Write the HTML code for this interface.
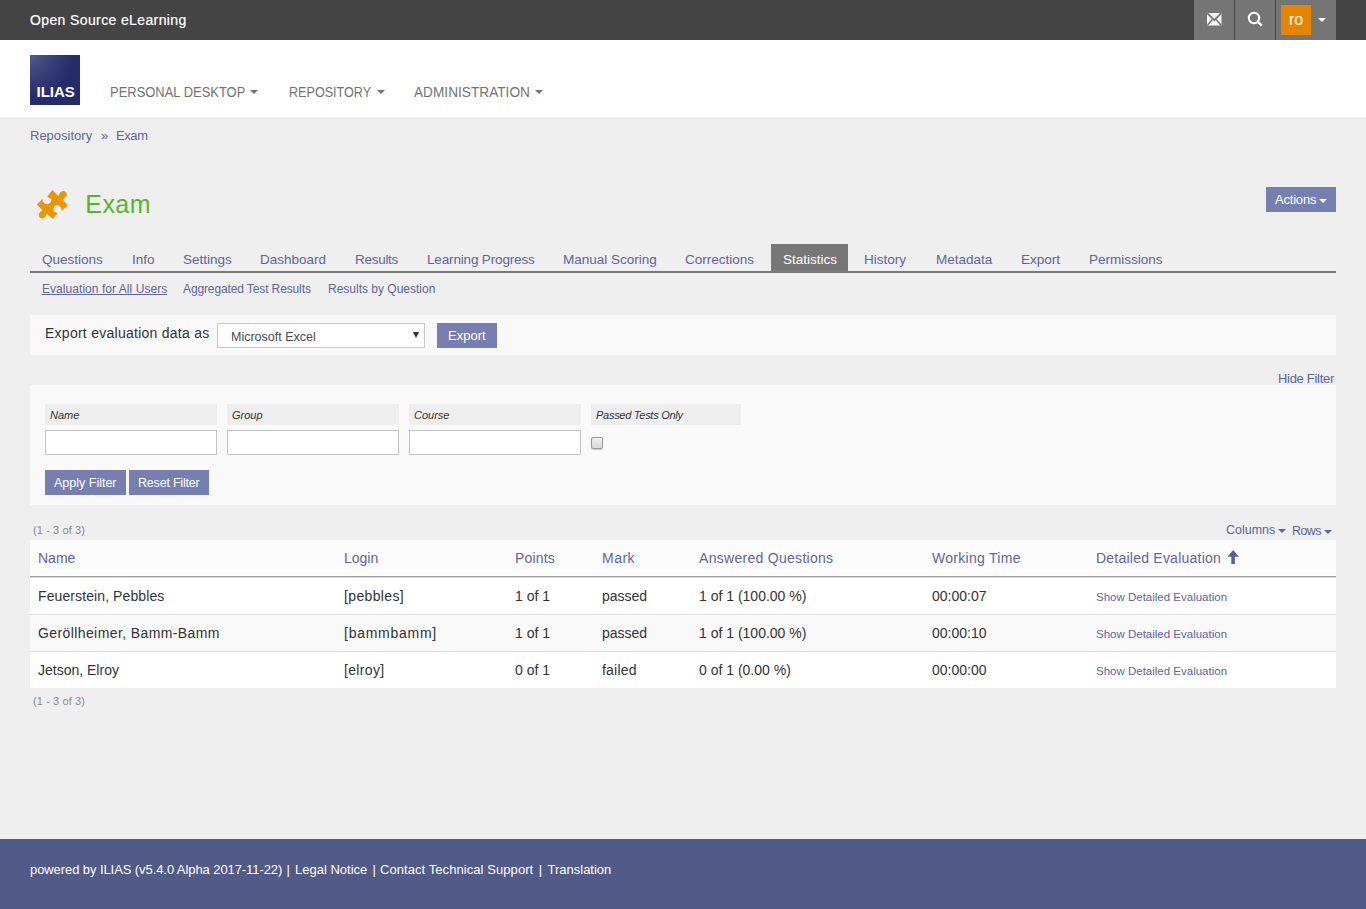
<!DOCTYPE html>
<html><head><meta charset="utf-8">
<style>
*{box-sizing:border-box;margin:0;padding:0}
html,body{width:1366px;height:909px;overflow:hidden}
body{font-family:"Liberation Sans",sans-serif;background:#efefef;position:relative;color:#333333;font-size:14px;line-height:1}
.a{position:absolute;white-space:nowrap;line-height:1}
.bx{position:absolute}
.lnk{color:#60659e}
#top{left:0;top:0;width:1366px;height:40px;background:#444444}
#hdr{left:0;top:40px;width:1366px;height:77px;background:#fff}
#logo{left:30px;top:55px;width:50px;height:50px;background:radial-gradient(ellipse at 0% 0%,#525a8e 0%,#3a4079 30%,#262d6a 60%,#222a68 100%);overflow:hidden}
.nav{top:85px;color:#737373;font-size:14px;transform-origin:0 0}
.caret{display:inline-block;width:0;height:0;border-left:4px solid transparent;border-right:4px solid transparent;border-top:4px solid currentColor;vertical-align:middle}
.tab{top:252.5px;font-size:13.5px;color:#60659e}
.sub{top:283.4px;font-size:12px;color:#60659e}
.btn{background:#777fb0;color:#fff}
.lbl{background:#eeeeee;font-style:italic;font-size:11px;color:#333}
.inp{background:#fff;border:1px solid #c4c4c4}
.th{top:551px;font-size:14px;color:#60659e}
.td{font-size:14px;color:#333333}
.sde{font-size:11.5px;color:#60659e}
.ft{top:863px;font-size:13px;color:#fff}
#footer{left:0;top:839px;width:1366px;height:70px;background:#525a87;color:#fff}
</style></head>
<body>
<!-- top bar -->
<div id="top" class="bx"></div>
<div class="a" style="left:30px;top:13px;color:#fff;font-size:14px;letter-spacing:0.38px;-webkit-text-stroke:0.2px #fff">Open Source eLearning</div>
<div class="bx" style="left:1194px;top:0;width:142px;height:40px;background:#757575"></div>
<div class="bx" style="left:1234px;top:0;width:1px;height:40px;background:#464646"></div>
<div class="bx" style="left:1275px;top:0;width:1px;height:40px;background:#464646"></div>
<svg class="bx" style="left:1206px;top:12px" width="17" height="15" viewBox="0 0 17 15">
  <rect x="1" y="1" width="14.5" height="12.5" fill="#f4f4f4"/>
  <path d="M1.2 1.2 L8.25 8.2 L15.3 1.2" stroke="#757575" stroke-width="1.7" fill="none"/>
  <path d="M1.2 13.4 L6.3 7.4 M15.3 13.4 L10.2 7.4" stroke="#757575" stroke-width="1.5" fill="none"/>
</svg>
<svg class="bx" style="left:1246px;top:11px" width="19" height="17" viewBox="0 0 19 17">
  <circle cx="8" cy="7" r="5.2" stroke="#fff" stroke-width="2" fill="none"/>
  <path d="M11.6 10.6 L15.8 14.6" stroke="#fff" stroke-width="2.6" stroke-linecap="butt"/>
</svg>
<div class="bx" style="left:1281px;top:5px;width:30px;height:30px;background:#e68500"></div>
<div class="a" style="left:1289px;top:11.8px;color:#fff;font-size:16px">ro</div>
<div class="bx" style="left:1318px;top:18px;width:0;height:0;border-left:4px solid transparent;border-right:4px solid transparent;border-top:4px solid #fff"></div>

<!-- header -->
<div id="hdr" class="bx"></div>
<div id="logo" class="bx"><div class="a" style="left:6.5px;top:28.7px;color:#fff;font-weight:bold;font-size:15px">ILIAS</div></div>
<div class="a nav" style="left:110px;transform:scaleX(0.925)">PERSONAL DESKTOP</div>
<div class="bx caret" style="left:250px;top:90px;color:#737373"></div>
<div class="a nav" style="left:289px;transform:scaleX(0.899)">REPOSITORY</div>
<div class="bx caret" style="left:377px;top:90px;color:#737373"></div>
<div class="a nav" style="left:414px;transform:scaleX(0.976)">ADMINISTRATION</div>
<div class="bx caret" style="left:535px;top:90px;color:#737373"></div>

<!-- breadcrumb -->
<div class="a lnk" style="left:30px;top:129px;font-size:13px">Repository</div>
<div class="a" style="left:101px;top:129px;font-size:13px;color:#60659e">»</div>
<div class="a lnk" style="left:116px;top:129px;font-size:13px;letter-spacing:-0.4px">Exam</div>

<!-- title -->
<svg class="bx" style="left:32px;top:186px" width="40" height="36" viewBox="0 0 1010 909">
  <path fill="#e8960a" d="M515,100 L665,252 C690,235 690,150 760,130 C830,115 890,170 880,230 C870,290 800,320 780,345 L905,490 L750,625 C740,560 720,500 640,482 C580,475 540,540 540,600 C540,630 560,650 650,690 L520,830 L370,700 C350,730 350,800 270,820 C210,830 165,780 172,720 C180,660 240,630 260,612 L125,470 L258,330 C270,380 300,460 370,462 C450,462 490,400 490,335 C460,310 420,290 385,262 Z"/>
</svg>
<div class="a" style="left:85.3px;top:192px;font-size:25px;color:#57b530;letter-spacing:0.45px">Exam</div>
<div class="bx btn" style="left:1266px;top:187px;width:70px;height:25px"></div>
<div class="a" style="left:1275px;top:193px;font-size:13px;color:#fff;letter-spacing:-0.2px">Actions</div>
<div class="bx caret" style="left:1319px;top:199px;color:#fff"></div>

<!-- tabs -->
<div class="bx" style="left:771px;top:244px;width:77px;height:28px;background:#777777"></div>
<div class="bx" style="left:30px;top:271px;width:1306px;height:2px;background:#7a7a7a"></div>
<div class="a tab" style="left:42px">Questions</div>
<div class="a tab" style="left:132px">Info</div>
<div class="a tab" style="left:183px">Settings</div>
<div class="a tab" style="left:260px">Dashboard</div>
<div class="a tab" style="left:355px;letter-spacing:-0.28px">Results</div>
<div class="a tab" style="left:427px;letter-spacing:-0.16px">Learning Progress</div>
<div class="a tab" style="left:563px">Manual Scoring</div>
<div class="a tab" style="left:685px">Corrections</div>
<div class="a tab" style="left:783px;color:#fff">Statistics</div>
<div class="a tab" style="left:864px">History</div>
<div class="a tab" style="left:936px">Metadata</div>
<div class="a tab" style="left:1021px">Export</div>
<div class="a tab" style="left:1089px">Permissions</div>

<div class="a sub" style="left:42px;letter-spacing:0.05px">Evaluation for All Users</div>
<div class="bx" style="left:42px;top:294px;width:125px;height:1px;background:#60659e"></div>
<div class="a sub" style="left:183px;letter-spacing:-0.12px">Aggregated Test Results</div>
<div class="a sub" style="left:328px">Results by Question</div>

<!-- export panel -->
<div class="bx" style="left:30px;top:315px;width:1306px;height:40px;background:#f9f9f9"></div>
<div class="a" style="left:45px;top:326px;font-size:14px;color:#333333;letter-spacing:0.26px">Export evaluation data as</div>
<div class="bx" style="left:217px;top:323px;width:208px;height:25px;background:#fff;border:1px solid #c9c9c9"></div>
<div class="a" style="left:231px;top:331px;font-size:12.5px;color:#4a4a4a">Microsoft Excel</div>
<div class="bx" style="left:413px;top:332px;width:0;height:0;border-left:3px solid transparent;border-right:3px solid transparent;border-top:6px solid #333"></div>
<div class="bx btn" style="left:437px;top:323px;width:60px;height:25px"></div>
<div class="a" style="left:448px;top:329px;font-size:13px;color:#fff">Export</div>

<!-- filter -->
<div class="a lnk" style="left:1278px;top:372px;font-size:13px;letter-spacing:-0.3px">Hide Filter</div>
<div class="bx" style="left:30px;top:385px;width:1306px;height:120px;background:#f9f9f9"></div>
<div class="bx lbl" style="left:45px;top:404px;width:172px;height:21px"><span class="a" style="left:5px;top:6px">Name</span></div>
<div class="bx lbl" style="left:227px;top:404px;width:172px;height:21px"><span class="a" style="left:5px;top:6px">Group</span></div>
<div class="bx lbl" style="left:409px;top:404px;width:172px;height:21px"><span class="a" style="left:5px;top:6px">Course</span></div>
<div class="bx lbl" style="left:591px;top:404px;width:150px;height:21px"><span class="a" style="left:5px;top:6px;letter-spacing:-0.27px">Passed Tests Only</span></div>
<div class="bx inp" style="left:45px;top:430px;width:172px;height:25px"></div>
<div class="bx inp" style="left:227px;top:430px;width:172px;height:25px"></div>
<div class="bx inp" style="left:409px;top:430px;width:172px;height:25px"></div>
<div class="bx" style="left:591px;top:437px;width:12px;height:12px;border:1px solid #9a9a9a;border-radius:2px;background:linear-gradient(#efefef,#d9d9d9);box-shadow:0 0.5px 1px rgba(0,0,0,0.2)"></div>
<div class="bx btn" style="left:45px;top:470px;width:81px;height:25px"></div>
<div class="a" style="left:54px;top:477px;font-size:12.5px;color:#fff">Apply Filter</div>
<div class="bx btn" style="left:129px;top:470px;width:80px;height:25px"></div>
<div class="a" style="left:138px;top:477px;font-size:12.5px;color:#fff;letter-spacing:-0.2px">Reset Filter</div>

<!-- table -->
<div class="a" style="left:33px;top:525px;font-size:11px;color:#8a8a8a;letter-spacing:0.1px">(1 - 3 of 3)</div>
<div class="a lnk" style="left:1226px;top:524px;font-size:12.5px">Columns</div>
<div class="bx caret" style="left:1278px;top:529px;color:#60659e"></div>
<div class="a lnk" style="left:1292px;top:525px;font-size:12.5px;letter-spacing:-0.6px">Rows</div>
<div class="bx caret" style="left:1324px;top:530px;color:#60659e"></div>

<div class="bx" style="left:30px;top:540px;width:1306px;height:35px;background:#fcfcfc"></div>
<div class="bx" style="left:30px;top:575px;width:1306px;height:1px;background:#fff"></div>
<div class="bx" style="left:30px;top:576px;width:1306px;height:1px;background:#9e9e9e"></div>
<div class="bx" style="left:30px;top:577px;width:1306px;height:1px;background:#dcdcdc"></div>
<div class="bx" style="left:30px;top:578px;width:1306px;height:36px;background:#fff"></div>
<div class="bx" style="left:30px;top:614px;width:1306px;height:1px;background:#dedede"></div>
<div class="bx" style="left:30px;top:615px;width:1306px;height:36px;background:#f9f9f9"></div>
<div class="bx" style="left:30px;top:651px;width:1306px;height:1px;background:#dedede"></div>
<div class="bx" style="left:30px;top:652px;width:1306px;height:36px;background:#fff"></div>

<div class="a th" style="left:38px">Name</div>
<div class="a th" style="left:344px">Login</div>
<div class="a th" style="left:515px;letter-spacing:0.18px">Points</div>
<div class="a th" style="left:602px;letter-spacing:0.5px">Mark</div>
<div class="a th" style="left:699px;letter-spacing:0.29px">Answered Questions</div>
<div class="a th" style="left:932px;letter-spacing:0.29px">Working Time</div>
<div class="a th" style="left:1096px;letter-spacing:0.23px">Detailed Evaluation</div>
<svg class="bx" style="left:1227px;top:550px" width="13" height="14" viewBox="0 0 13 14">
  <path d="M6.2 0 L12 6.7 L7.9 6.7 L7.9 14 L4.3 14 L4.3 6.7 L0.5 6.7 Z" fill="#5a5f99"/>
</svg>

<div class="a td" style="left:38px;top:589px;letter-spacing:0.1px">Feuerstein, Pebbles</div>
<div class="a td" style="left:344px;top:589px;letter-spacing:0.36px">[pebbles]</div>
<div class="a td" style="left:515px;top:589px">1 of 1</div>
<div class="a td" style="left:602px;top:589px">passed</div>
<div class="a td" style="left:699px;top:589px">1 of 1 (100.00 %)</div>
<div class="a td" style="left:932px;top:589px">00:00:07</div>
<div class="a sde" style="left:1096px;top:592px">Show Detailed Evaluation</div>

<div class="a td" style="left:38px;top:626px;letter-spacing:0.4px">Geröllheimer, Bamm-Bamm</div>
<div class="a td" style="left:344px;top:626px;letter-spacing:0.74px">[bammbamm]</div>
<div class="a td" style="left:515px;top:626px">1 of 1</div>
<div class="a td" style="left:602px;top:626px">passed</div>
<div class="a td" style="left:699px;top:626px">1 of 1 (100.00 %)</div>
<div class="a td" style="left:932px;top:626px">00:00:10</div>
<div class="a sde" style="left:1096px;top:629px">Show Detailed Evaluation</div>

<div class="a td" style="left:38px;top:663px">Jetson, Elroy</div>
<div class="a td" style="left:344px;top:663px;letter-spacing:0.34px">[elroy]</div>
<div class="a td" style="left:515px;top:663px">0 of 1</div>
<div class="a td" style="left:602px;top:663px;letter-spacing:0.2px">failed</div>
<div class="a td" style="left:699px;top:663px">0 of 1 (0.00 %)</div>
<div class="a td" style="left:932px;top:663px">00:00:00</div>
<div class="a sde" style="left:1096px;top:666px">Show Detailed Evaluation</div>

<div class="a" style="left:33px;top:696px;font-size:11px;color:#8a8a8a;letter-spacing:0.1px">(1 - 3 of 3)</div>

<!-- footer -->
<div id="footer" class="bx"></div>
<div class="a ft" style="left:30px;letter-spacing:-0.08px">powered by ILIAS (v5.4.0 Alpha 2017-11-22)</div>
<div class="a ft" style="left:286.5px">|</div>
<div class="a ft" style="left:295px">Legal Notice</div>
<div class="a ft" style="left:372.5px">|</div>
<div class="a ft" style="left:380px;letter-spacing:0.07px">Contact Technical Support</div>
<div class="a ft" style="left:538.8px">|</div>
<div class="a ft" style="left:547.5px">Translation</div>
</body></html>
